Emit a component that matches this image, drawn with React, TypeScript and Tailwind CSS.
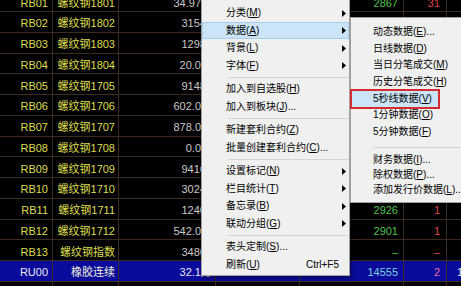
import React from "react";

interface IRow {
  code: string;
  name: string;
  price: string;
  vol: string;
  last: string;
  chg: string;
  extra?: string;
  active?: boolean;
}

const rows: IRow[] = [
  { code: "RB01", name: "螺纹钢1801", price: "34.97万", vol: "3612", last: "2867", chg: "31" },
  { code: "RB02", name: "螺纹钢1802", price: "31546", vol: "2870", last: "2851", chg: "12" },
  { code: "RB03", name: "螺纹钢1803", price: "12986", vol: "2841", last: "2842", chg: "8" },
  { code: "RB04", name: "螺纹钢1804", price: "20.0万", vol: "2833", last: "2830", chg: "6" },
  { code: "RB05", name: "螺纹钢1705", price: "91482", vol: "3021", last: "3011", chg: "4" },
  { code: "RB06", name: "螺纹钢1706", price: "602.0万", vol: "2998", last: "2990", chg: "3" },
  { code: "RB07", name: "螺纹钢1707", price: "878.0万", vol: "2975", last: "2968", chg: "2" },
  { code: "RB08", name: "螺纹钢1708", price: "0.0万", vol: "2960", last: "2955", chg: "2" },
  { code: "RB09", name: "螺纹钢1709", price: "94168", vol: "2948", last: "2940", chg: "1" },
  { code: "RB10", name: "螺纹钢1710", price: "30245", vol: "2935", last: "2931", chg: "1" },
  { code: "RB11", name: "螺纹钢1711", price: "12405", vol: "2929", last: "2926", chg: "1" },
  { code: "RB12", name: "螺纹钢1712", price: "542.0万", vol: "2904", last: "2901", chg: "1" },
  { code: "RB13", name: "螺纹钢指数", price: "34867", vol: "", last: "–", chg: "–" },
  { code: "RU00", name: "橡胶连续", price: "32.1万", vol: "14560", last: "14555", chg: "2", extra: "14560", active: true },
  { code: "RU01", name: "橡胶1801", price: "25.4万", vol: "14620", last: "14610", chg: "5" },
];

const Row = ({ r }: { r: IRow }) => {
  const cell = "h-full shrink-0 flex items-center justify-end pt-[4px] border-r border-[#3d2b1f] whitespace-nowrap";
  return (
    <div
      className={`flex h-[20.75px] border-b border-[#3d2b1f] ${
        r.active ? "bg-[#0a0a9c]" : "bg-black"
      }`}
    >
      <div className={`${cell} w-[53px] pr-[4px] ${r.active ? "text-[#ececec]" : "text-[#dcdc50]"}`}>
        {r.code}
      </div>
      <div className={`${cell} w-[66px] pr-[3px] ${r.active ? "text-[#f0f0d8]" : "text-[#dcdc50]"}`}>
        {r.name}
      </div>
      <div className={`${cell} w-[97px] pr-[3px] ${r.active ? "text-[#e8e8e8]" : "text-[#c8c8c8]"}`}>
        {r.price}
      </div>
      <div className={`${cell} w-[84px] pr-[2px] ${r.active ? "text-[#78d0d8]" : "text-[#50c050]"}`}>
        {r.vol}
      </div>
      <div className={`${cell} w-[104px] pr-[5px] ${r.active ? "text-[#78d0d8]" : "text-[#50c050]"}`}>
        {r.last}
      </div>
      <div className={`${cell} w-[43px] pr-[6px] ${r.active ? "text-[#f070a0]" : "text-[#e04848]"}`}>
        {r.chg}
      </div>
      <div className="h-full w-[60px] shrink-0 flex items-center pt-[4px] pl-[10px] text-[#e8e8e8] whitespace-nowrap">
        {r.extra ?? ""}
      </div>
    </div>
  );
};

const Arrow = () => (
  <svg width="4" height="7" viewBox="0 0 4 7" className="ml-auto">
    <path d="M0 0 L4 3.5 L0 7 Z" fill="#000" />
  </svg>
);

interface IMenuItem {
  label: string;
  key?: string;
  tail?: string;
  sub?: boolean;
  shortcut?: string;
  active?: boolean;
  sep?: boolean;
}

const mainItems: IMenuItem[] = [
  { label: "分类", key: "M", sub: true },
  { label: "数据", key: "A", sub: true, active: true },
  { label: "背景", key: "L", sub: true },
  { label: "字体", key: "F", sub: true },
  { label: "", sep: true },
  { label: "加入到自选股", key: "H" },
  { label: "加入到板块", key: "J", tail: "..." },
  { label: "", sep: true },
  { label: "新建套利合约", key: "Z" },
  { label: "批量创建套利合约", key: "C", tail: "..." },
  { label: "", sep: true },
  { label: "设置标记", key: "N", sub: true },
  { label: "栏目统计", key: "T", sub: true },
  { label: "备忘录", key: "B", sub: true },
  { label: "联动分组", key: "G", sub: true },
  { label: "", sep: true },
  { label: "表头定制", key: "S", tail: "..." },
  { label: "刷新", key: "U", shortcut: "Ctrl+F5" },
];

const subTop: IMenuItem[] = [
  { label: "动态数据", key: "E", tail: "..." },
  { label: "日线数据", key: "D" },
  { label: "当日分笔成交", key: "M" },
  { label: "历史分笔成交", key: "H" },
  { label: "5秒线数据", key: "V", active: true },
  { label: "1分钟数据", key: "O" },
  { label: "5分钟数据", key: "F" },
];

const subBottom: IMenuItem[] = [
  { label: "财务数据", key: "I", tail: "..." },
  { label: "除权数据", key: "P", tail: "..." },
  { label: "添加发行价数据", key: "L", tail: "..." },
];

const Label = ({ it }: { it: IMenuItem }) => (
  <span className="whitespace-nowrap">
    {it.label}(<u className="underline-offset-1">{it.key}</u>){it.tail ?? ""}
  </span>
);

export default function App() {
  return (
    <div className="relative w-[461px] h-[286px] overflow-hidden bg-black font-['Liberation_Sans','Noto_Sans_CJK_SC',sans-serif] text-[11px] leading-none">
      <div className="mt-[-8.75px]">
        {rows.map((r) => (
          <Row key={r.code} r={r} />
        ))}
      </div>

      {/* context menu */}
      <div className="absolute left-[201px] top-[-3px] w-[149px] bg-[#f0f0f0] border border-[#a0a0a0] pt-[6.25px] pb-[2px] text-[10px] text-black shadow-[2px_2px_3px_rgba(0,0,0,0.4)]">
        {mainItems.map((it, i) =>
          it.sep ? (
            <div key={i} className="h-[6px] flex items-center pl-[26px]">
              <div className="h-px flex-1 bg-[#d4d4d4]" />
            </div>
          ) : (
            <div
              key={i}
              className={`h-[17.5px] flex items-center pl-[23px] pr-[2px] border ${
                it.active ? "bg-[#cce4f7] border-[#a8cff0]" : "border-transparent"
              }`}
            >
              <Label it={it} />
              {it.sub && <Arrow />}
              {it.shortcut && <span className="ml-auto mr-[7px]">{it.shortcut}</span>}
            </div>
          )
        )}
      </div>

      {/* submenu */}
      <div className="absolute left-[350px] top-[17px] w-[140px] bg-[#f0f0f0] border border-[#a0a0a0] pt-[6px] pb-[5px] text-[10px] text-black">
        {subTop.map((it, i) => (
          <div
            key={i}
            className={`h-[16.6px] flex items-center pl-[22px] ${
              it.active ? "w-[87px] bg-[#cce4f7]" : ""
            }`}
          >
            <Label it={it} />
          </div>
        ))}
        <div className="h-[12px] pt-[7px] pl-[22px]">
          <div className="h-px bg-[#d4d4d4]" />
        </div>
        {subBottom.map((it, i) => (
          <div key={i} className="h-[15px] flex items-center pl-[22px]">
            <Label it={it} />
          </div>
        ))}
      </div>

      {/* red annotation box */}
      <div className="absolute left-[350px] top-[89px] w-[90px] h-[20px] border-2 border-[#d42a30]" />
    </div>
  );
}
